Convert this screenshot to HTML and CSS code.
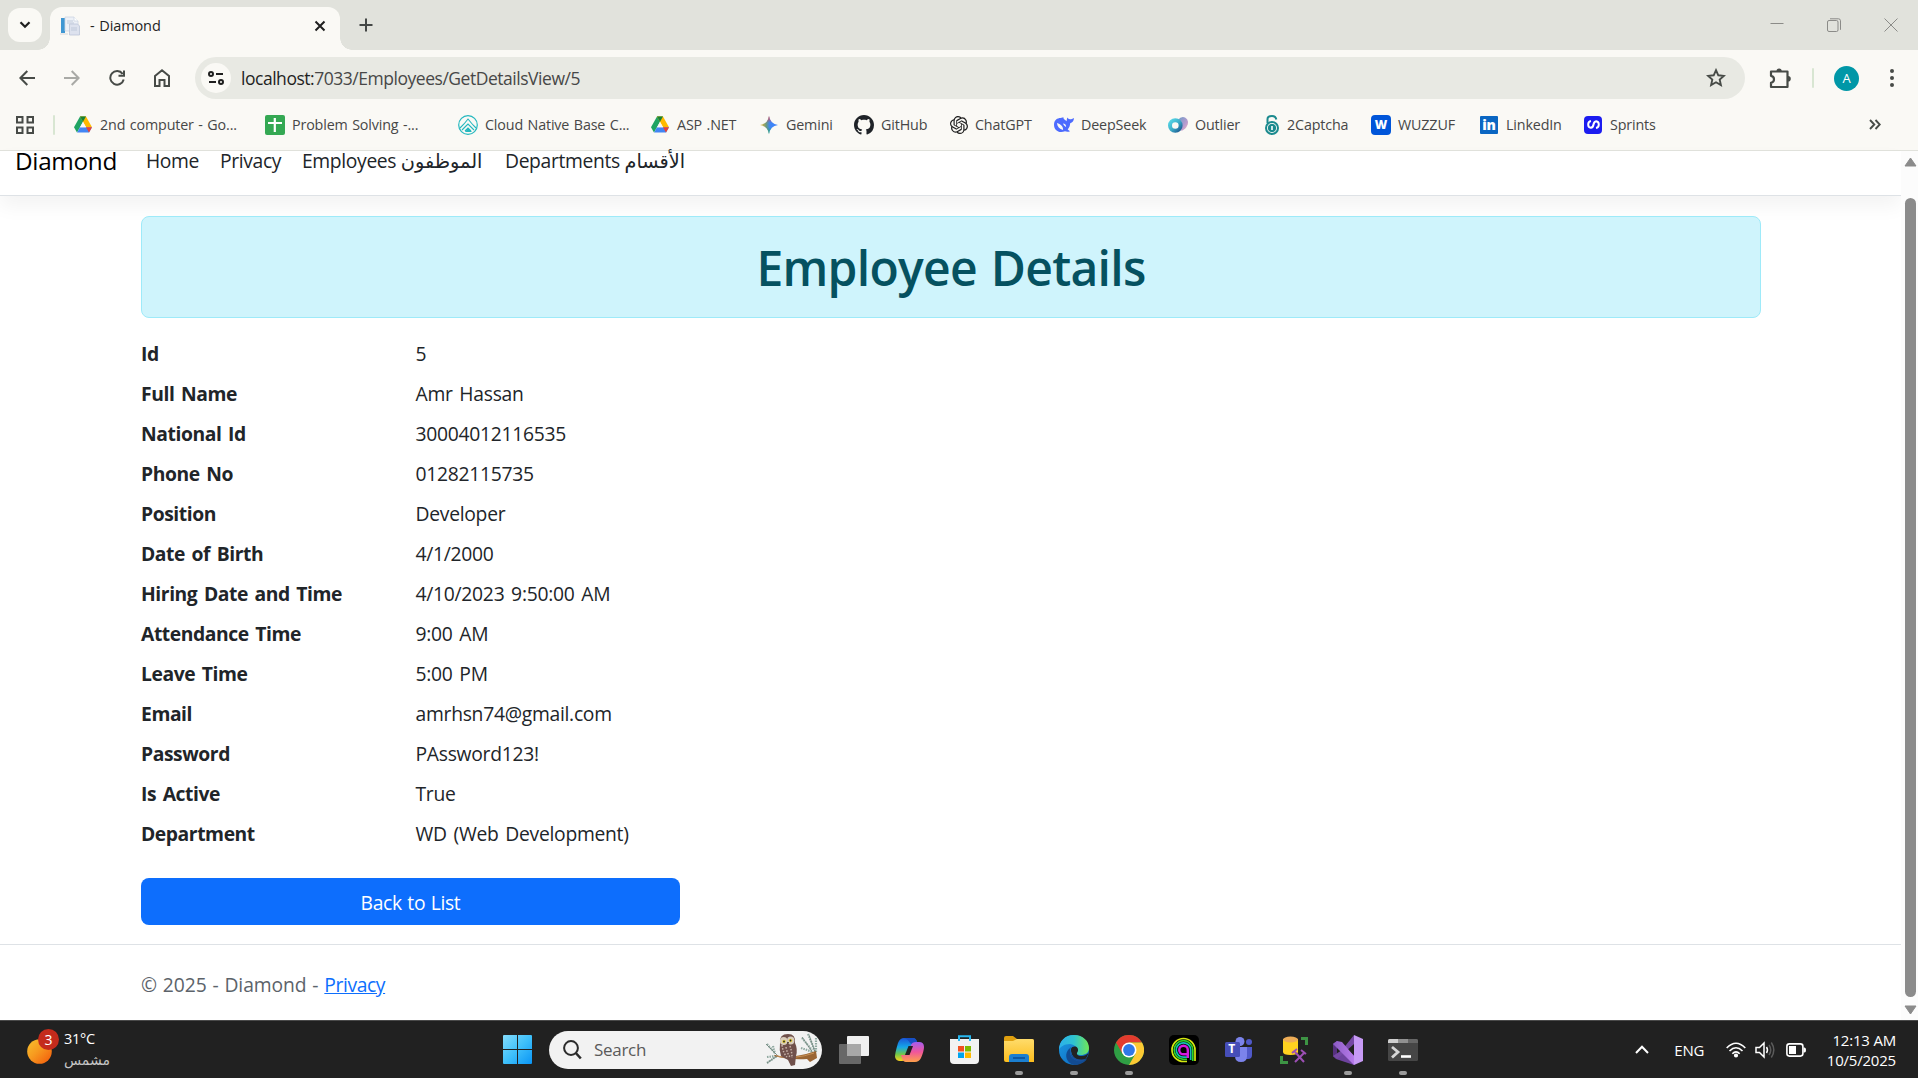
FILE: index.html
```html
<!DOCTYPE html>
<html lang="en">
<head>
<meta charset="utf-8">
<title>- Diamond</title>
<link rel="stylesheet" href="styles.css">
</head>
<body>
<svg width="0" height="0" class="defs" aria-hidden="true">
  <defs>
    <linearGradient id="sun" x1="0" y1="0" x2="1" y2="1"><stop offset="0" stop-color="#f7c12d"/><stop offset=".45" stop-color="#f79a1f"/><stop offset="1" stop-color="#f2560a"/></linearGradient>
    <linearGradient id="win" x1="0" y1="0" x2="1" y2="1"><stop offset="0" stop-color="#84dcfb"/><stop offset=".5" stop-color="#3fc0fa"/><stop offset="1" stop-color="#0a95f5"/></linearGradient>
    <linearGradient id="cpA" x1="0" y1="0" x2="0" y2="1"><stop offset="0" stop-color="#1a55d8"/><stop offset=".4" stop-color="#15a7e8"/><stop offset=".7" stop-color="#6fc64a"/><stop offset="1" stop-color="#fbd21c"/></linearGradient>
    <linearGradient id="cpB" x1="0" y1="0" x2="0" y2="1"><stop offset="0" stop-color="#a45cf0"/><stop offset=".5" stop-color="#f0569b"/><stop offset="1" stop-color="#fda04a"/></linearGradient>
    <linearGradient id="folder" x1="0" y1="0" x2="0" y2="1"><stop offset="0" stop-color="#ffdc6b"/><stop offset="1" stop-color="#fcbd1d"/></linearGradient>
    <linearGradient id="edgeA" x1="0" y1="0" x2="1" y2="0"><stop offset="0" stop-color="#2cb0ec"/><stop offset=".5" stop-color="#2fc3cf"/><stop offset="1" stop-color="#70e856"/></linearGradient>
    <linearGradient id="edgeB" x1="0" y1="0" x2="1" y2="1"><stop offset="0" stop-color="#1c9de4"/><stop offset="1" stop-color="#0b60bb"/></linearGradient>
    <linearGradient id="vs" x1="0" y1="0" x2="1" y2="0"><stop offset="0" stop-color="#8b5bc4"/><stop offset="1" stop-color="#b77bea"/></linearGradient>
    <linearGradient id="gem" x1="0" y1=".5" x2="1" y2=".5"><stop offset="0" stop-color="#f5b92a"/><stop offset=".35" stop-color="#6c9a80"/><stop offset=".55" stop-color="#3f86f7"/><stop offset="1" stop-color="#3d82f8"/></linearGradient>
    <linearGradient id="gemV" x1="0" y1="0" x2="0" y2="1"><stop offset="0" stop-color="#f0453d"/><stop offset=".38" stop-color="#f0453d" stop-opacity="0"/><stop offset=".62" stop-color="#23a858" stop-opacity="0"/><stop offset="1" stop-color="#23a858"/></linearGradient>
    <linearGradient id="outA" x1="0" y1="0" x2="1" y2="1"><stop offset="0" stop-color="#55d6e6"/><stop offset=".5" stop-color="#3eafc9"/><stop offset="1" stop-color="#1d5c93"/></linearGradient>
    <linearGradient id="outB" x1="0" y1="0" x2="1" y2="1"><stop offset="0" stop-color="#6b9bc7"/><stop offset=".6" stop-color="#b79bcf"/><stop offset="1" stop-color="#f2b4bd"/></linearGradient>
    <symbol id="drive" viewBox="0 0 18 16">
      <path d="M6 0h6L3 16 0 10.7z" fill="#1fa463"/><path d="M6 0h6l6 10.7h-6z" fill="#ffba00"/><path d="M3.1 16 6 10.7h12L15 16z" fill="#4285f4"/><path d="M12 10.7h6L15 16z" fill="#ea4335"/><path d="M6 0 9 5.3 12 0z" fill="#188038"/><path d="M9 5.3 12.1 10.7H6z" fill="#faf9f5"/>
    </symbol>
  </defs>
</svg>

<div class="screen">
  <div class="tabstrip">
    <button class="tab-search"><svg width="12" height="8" viewBox="0 0 12 8"><path d="M1.500 1.200L6 5.800l4.500-4.600" fill="none" stroke="#1f1f1f" stroke-width="2.200"/></svg></button>
    <div class="tab">
      <svg class="favicon" width="20" height="20" viewBox="0 0 20 20"><path d="M1 2h4v15H1z" fill="#3f97d3"/><path d="M5 1h9l4 4v10H5z" fill="#edf1f7" stroke="#cdd5e2" stroke-width=".8"/><path d="M14 1v4h4" fill="#fff" stroke="#cdd5e2" stroke-width=".8"/><path d="M9.500 8h8l2 2v9h-10z" fill="#dde2ee" stroke="#bcc5d8" stroke-width=".8"/><path d="M7 5h6M7 7h7M11 12h6M11 14h6" stroke="#bfc9da"/><path d="M0 18h8" stroke="#d8d8da"/></svg>
      <span class="tab-title">- Diamond</span>
      <svg class="tab-close" width="12" height="12" viewBox="0 0 12 12"><path d="M1.500 1.500l9 9M10.500 1.500l-9 9" stroke="#1f1f1f" stroke-width="2"/></svg>
    </div>
    <svg class="new-tab" width="14" height="14" viewBox="0 0 14 14"><path d="M7 .5v13M.5 7h13" stroke="#444746" stroke-width="2"/></svg>
    <div class="window-controls">
      <svg width="14" height="14" viewBox="0 0 14 14"><path d="M.5 5.500h13" stroke="#8b8b88"/></svg>
      <svg width="14" height="14" viewBox="0 0 14 14" fill="none" stroke="#8b8b88"><rect x=".5" y="2.500" width="10.500" height="11" rx="1.500"/><path d="M3 .8h8.500q2 0 2 2v9"/></svg>
      <svg width="14" height="14" viewBox="0 0 14 14"><path d="M.5.5l13 13M13.500.5l-13 13" stroke="#8b8b88"/></svg>
    </div>
  </div>

  <div class="toolbar">
    <svg class="tool" width="16" height="16" viewBox="0 0 16 16" fill="none" stroke="#474b47" stroke-width="2"><path d="M16 8H1.500M8.300 1L1.400 8l6.900 7"/></svg>
    <svg class="tool" width="16" height="16" viewBox="0 0 16 16" fill="none" stroke="#a9aaa6" stroke-width="2"><path d="M0 8h14.500M7.700 1l6.900 7-6.900 7"/></svg>
    <svg class="tool" width="16" height="16" viewBox="0 0 16 16" fill="none" stroke="#474b47" stroke-width="2"><path d="M13.600 3.800A6.800 6.800 0 1 0 14.700 9.500M15 .5v5.200H9.500"/></svg>
    <svg class="tool" width="16" height="18" viewBox="0 0 16 18" fill="none" stroke="#474b47" stroke-width="2"><path d="M1 7l7-5.700L15 7v10h-4.500v-6h-5v6H1z"/></svg>
    <div class="omnibox">
      <span class="site-info"><svg width="16" height="14" viewBox="0 0 16 14" fill="none" stroke="#1f1f1f" stroke-width="2"><circle cx="3" cy="3" r="2"/><path d="M8 3h7M1 11h7"/><circle cx="13" cy="11" r="2"/></svg></span>
      <span class="url"><b>localhost:</b>7033/Employees/GetDetailsView/5</span>
      <svg class="star" width="20" height="20" viewBox="0 0 20 20"><path d="M10 2.200l2.300 5.100 5.500.6-4.100 3.700 1.200 5.500L10 14.300l-4.900 2.800 1.200-5.500-4.100-3.700 5.500-.6z" fill="none" stroke="#474b47" stroke-width="1.900"/></svg>
    </div>
    <svg class="puzzle" width="22" height="22" viewBox="0 0 22 22"><path d="M2 4.500h16.500v15.500H2v-4.200q3-.5 3-3.500t-3-3.500z" fill="none" stroke="#474b47" stroke-width="2.200" stroke-linejoin="round"/><path d="M7.500 4a2.600 2.600 0 0 1 5.200 0zM19 9a2.800 2.800 0 0 1 0 5.600z" fill="#474b47"/></svg>
    <i class="divider"></i>
    <span class="avatar">A</span>
    <svg class="menu" width="4" height="18" viewBox="0 0 4 18" fill="#474b47"><circle cx="2" cy="2" r="2"/><circle cx="2" cy="9" r="2"/><circle cx="2" cy="16" r="2"/></svg>
  </div>

  <div class="bookmarks">
    <svg class="apps" width="18" height="18" viewBox="0 0 18 18" fill="none" stroke="#474b47" stroke-width="2"><path d="M1 1h5.500v5.500H1zM11.500 1H17v5.500h-5.500zM1 11.500h5.500V17H1zM11.500 11.500H17V17h-5.500z"/></svg>
    <i class="divider"></i>
    <div class="bm b1"><svg width="18" height="17"><use href="#drive"/></svg><span>2nd computer - Go...</span></div>
    <div class="bm b2"><svg width="20" height="20" viewBox="0 0 20 20"><rect width="20" height="20" rx="2" fill="#34a853"/><path d="M9.800 3v14M3 8h14" stroke="#fff" stroke-width="2.200"/></svg><span>Problem Solving -...</span></div>
    <div class="bm b3"><svg width="20" height="20" viewBox="0 0 20 20" fill="none" stroke="#25b8bf"><circle cx="10" cy="10" r="9.300" stroke-width="1.200"/><path d="M2 13l4-4 4-5 5 6 3 3M4 15l4-4 2-2 6 6M7 16l3-3 3 3" stroke-width="1.100"/><path d="M7 17l3-4 4 4z" fill="#25b8bf" stroke="none"/></svg><span>Cloud Native Base C...</span></div>
    <div class="bm b4"><svg width="18" height="17"><use href="#drive"/></svg><span>ASP .NET</span></div>
    <div class="bm b5"><svg width="18" height="18" viewBox="0 0 18 18"><path d="M9 0q1.200 7.800 9 9-7.800 1.200-9 9-1.200-7.800-9-9 7.800-1.200 9-9z" fill="url(#gem)"/><path d="M9 0q1.200 7.800 9 9-7.800 1.200-9 9-1.200-7.800-9-9 7.800-1.200 9-9z" fill="url(#gemV)"/></svg><span>Gemini</span></div>
    <div class="bm b6"><svg width="20" height="20" viewBox="0 0 16 16"><path fill="#1f2328" d="M8 0C3.580 0 0 3.580 0 8c0 3.540 2.290 6.530 5.470 7.590.4.070.55-.17.55-.38 0-.19-.01-.82-.01-1.490-2.010.37-2.530-.49-2.690-.94-.09-.23-.48-.94-.82-1.130-.28-.15-.68-.52-.01-.53.63-.01 1.080.58 1.230.82.72 1.210 1.870.87 2.330.66.07-.52.28-.87.51-1.070-1.780-.2-3.640-.89-3.640-3.950 0-.87.31-1.590.82-2.150-.08-.2-.36-1.020.08-2.120 0 0 .67-.21 2.200.82.64-.18 1.320-.27 2-.27s1.360.09 2 .27c1.530-1.040 2.200-.82 2.200-.82.44 1.100.16 1.920.08 2.120.51.56.82 1.270.82 2.150 0 3.070-1.870 3.750-3.650 3.950.29.25.54.73.54 1.480 0 1.070-.01 1.930-.01 2.200 0 .21.15.46.55.38A8.010 8.010 0 0 0 16 8c0-4.420-3.580-8-8-8z"/></svg><span>GitHub</span></div>
    <div class="bm b7"><svg width="18" height="18" viewBox="0 0 24 24"><path fill="#1f1f1f" d="M22.282 9.821a5.985 5.985 0 0 0-.516-4.910 6.046 6.046 0 0 0-6.510-2.900A6.065 6.065 0 0 0 4.981 4.180a5.985 5.985 0 0 0-3.998 2.900 6.046 6.046 0 0 0 .743 7.097 5.980 5.980 0 0 0 .510 4.911 6.051 6.051 0 0 0 6.515 2.900A5.985 5.985 0 0 0 13.260 24a6.056 6.056 0 0 0 5.772-4.206 5.990 5.990 0 0 0 3.997-2.900 6.056 6.056 0 0 0-.747-7.073zM13.260 22.430a4.476 4.476 0 0 1-2.876-1.040l.141-.081 4.779-2.758a.795.795 0 0 0 .392-.681v-6.737l2.020 1.168a.071.071 0 0 1 .038.052v5.583a4.504 4.504 0 0 1-4.494 4.494zM3.600 18.304a4.470 4.470 0 0 1-.535-3.014l.142.085 4.783 2.759a.771.771 0 0 0 .780 0l5.843-3.369v2.332a.080.080 0 0 1-.033.062L9.740 19.950a4.500 4.500 0 0 1-6.140-1.646zM2.340 7.896a4.485 4.485 0 0 1 2.366-1.973V11.600a.766.766 0 0 0 .388.676l5.815 3.355-2.020 1.168a.076.076 0 0 1-.071 0l-4.830-2.786A4.504 4.504 0 0 1 2.340 7.872zm16.597 3.855l-5.833-3.387L15.119 7.200a.076.076 0 0 1 .071 0l4.830 2.791a4.494 4.494 0 0 1-.676 8.105v-5.678a.790.790 0 0 0-.407-.667zm2.010-3.023l-.141-.085-4.774-2.782a.776.776 0 0 0-.785 0L9.409 9.230V6.897a.066.066 0 0 1 .028-.061l4.830-2.787a4.500 4.500 0 0 1 6.680 4.660zm-12.640 4.135l-2.020-1.164a.080.080 0 0 1-.038-.057V6.075a4.500 4.500 0 0 1 7.375-3.453l-.142.080L8.704 5.460a.795.795 0 0 0-.393.681zm1.097-2.365l2.602-1.500 2.607 1.500v2.999l-2.597 1.500-2.607-1.500z"/></svg><span>ChatGPT</span></div>
    <div class="bm b8"><svg width="20" height="16" viewBox="0 0 20 16"><path d="M0 7.500C0 3 3.500 1 6.500 1l3-.8c-.5 1.500 1.500 2.500 3 4 .5-1 .3-2.500.8-3.600.8 1 1.500 1.600 2.700 1.700 1.400 0 2.500-.6 4-1.300-.2 3-1.500 4.700-3.800 5.200-.2 2.500-1 4.500-2.500 6.200l2.300 1.800c-2 .9-4 .4-5 .1C5 16.500 0 13.500 0 7.500zM3 6c.2 3.500 2.500 6 6 7 .5-3-2-6-6-7zm6 .5c.5 1.500 1.500 2.800 3 3.500.4-1.900-1-3.500-3-3.500z" fill="#4d6bfe" fill-rule="evenodd"/></svg><span>DeepSeek</span></div>
    <div class="bm b9"><svg width="20" height="16" viewBox="0 0 20 16"><path d="M10 3q3-4 7-2.500 4 2 2.700 7Q18 12 13.500 14z" fill="url(#outB)"/><circle cx="7.300" cy="8.500" r="5.300" fill="#faf9f5" stroke="url(#outA)" stroke-width="4"/></svg><span>Outlier</span></div>
    <div class="bm b10"><svg width="16" height="20" viewBox="0 0 16 20" fill="none" stroke="#1b8a8e"><path d="M3.500 8V4q0-3 4.500-3 3.700 0 4.300 3.500" stroke-width="2"/><circle cx="8" cy="13" r="6" stroke-width="2"/><circle cx="8" cy="13" r="3.700" fill="#1b8a8e"/><path d="M8 11v4" stroke="#fff" stroke-width="1.600"/></svg><span>2Captcha</span></div>
    <div class="bm b11"><span class="logo wuzzuf">W</span><span>WUZZUF</span></div>
    <div class="bm b12"><span class="logo linkedin">in</span><span>LinkedIn</span></div>
    <div class="bm b13"><span class="logo sprints"><svg width="13" height="9" viewBox="0 0 13 9" fill="none" stroke="#fff" stroke-width="2"><path d="M4 1Q1.200 1.500 1.200 4.500T3.800 7.800Q6 7.500 6.500 4.500T9.200 1.200Q11.800 1.500 11.800 4.500T9 8"/></svg></span><span>Sprints</span></div>
    <svg class="more" width="12" height="11" viewBox="0 0 12 11"><path d="M1 1l4.300 4.500L1 10M6.500 1l4.300 4.500L6.500 10" fill="none" stroke="#474b47" stroke-width="1.900"/></svg>
  </div>

  <div class="viewport">
    <div class="page">
      <header class="navbar">
        <a class="brand">Diamond</a>
        <nav><a class="n1">Home</a><a class="n2">Privacy</a><a class="n3">Employees <bdi>الموظفون</bdi></a><a class="n4">Departments <bdi>الأقسام</bdi></a></nav>
      </header>
      <main class="container">
        <div class="alert"><h1>Employee Details</h1></div>
        <dl>
          <dt>Id</dt><dd>5</dd>
          <dt>Full Name</dt><dd>Amr Hassan</dd>
          <dt>National Id</dt><dd>30004012116535</dd>
          <dt>Phone No</dt><dd>01282115735</dd>
          <dt>Position</dt><dd>Developer</dd>
          <dt>Date of Birth</dt><dd>4/1/2000</dd>
          <dt>Hiring Date and Time</dt><dd>4/10/2023 9:50:00 AM</dd>
          <dt>Attendance Time</dt><dd>9:00 AM</dd>
          <dt>Leave Time</dt><dd>5:00 PM</dd>
          <dt>Email</dt><dd>amrhsn74@gmail.com</dd>
          <dt>Password</dt><dd>PAssword123!</dd>
          <dt>Is Active</dt><dd>True</dd>
          <dt>Department</dt><dd>WD (Web Development)</dd>
        </dl>
        <a class="btn">Back to List</a>
      </main>
      <footer>© 2025 - Diamond - <a>Privacy</a></footer>
    </div>
    <div class="scrollbar">
      <svg width="13" height="10" viewBox="0 0 13 10"><path d="M6.500 1L12 9H1z" fill="#8b8b8b" stroke="#8b8b8b" stroke-linejoin="round"/></svg>
      <i class="thumb"></i>
      <svg width="13" height="10" viewBox="0 0 13 10"><path d="M6.500 9L12 1H1z" fill="#8b8b8b" stroke="#8b8b8b" stroke-linejoin="round"/></svg>
    </div>
  </div>

  <div class="taskbar">
    <div class="weather">
      <div class="sun"><svg width="25" height="25" viewBox="0 0 25 25"><circle cx="12.500" cy="12.500" r="12.300" fill="url(#sun)"/></svg><span class="badge">3</span></div>
      <div class="forecast"><span>31°C</span><span class="cond" lang="ar">مشمس</span></div>
    </div>
    <div class="dock">
      <span class="app start"><svg width="29" height="29" viewBox="0 0 29 29"><path d="M0 1q0-1 1-1h13v14H0zM15 0h13q1 0 1 1v13H15zM0 15h14v14H1q-1 0-1-1zM15 15h14v13q0 1-1 1H15z" fill="url(#win)"/></svg></span>
      <div class="search">
        <svg width="19" height="20" viewBox="0 0 19 20" fill="none" stroke="#2b2b2b"><circle cx="8" cy="8" r="6.900" stroke-width="2"/><path d="M12.800 13l5 5.500" stroke-width="2.600"/></svg>
        <span>Search</span>
        <svg class="owl" width="54" height="34" viewBox="0 0 54 34">
          <g fill="none" stroke="#8fa8a0" stroke-width="2.200" stroke-dasharray="1.500 1"><path d="M2 11l8 9M8 13l2 8M2 30l10-7M2 24l9-1M37 5l10 12M43 1l7 17M36 15l12 4M51 5v14"/></g>
          <path d="M1 11l12 12M2 30l10-7M37 4l11 16M44 2l6 17" stroke="#6b8278" fill="none" stroke-width=".8"/>
          <path d="M10 22q14 5 41-4l1 7-7 4-3-3q-18 1-33-3z" fill="#9a6534"/><path d="M12 23q17 4 37-3" fill="none" stroke="#c99155"/>
          <path d="M15 10Q14 1 23 1q8 0 7 9 3 6 1 13l-1 9-4 1-3-6-7-4q-2-6-1-13z" fill="#70504b"/>
          <path d="M17 12q1 8 5 12M21 14q1 6 4 10M25 13q2 6 2 12" stroke="#c7b3a9" stroke-width="1.500" stroke-dasharray="1.500 1.500" fill="none"/>
          <ellipse cx="18.700" cy="8" rx="3.800" ry="4" fill="#d9cdbb"/><ellipse cx="25.700" cy="7.500" rx="3.700" ry="4" fill="#d9cdbb"/><circle cx="19" cy="8.500" r="1.800" fill="#e8cf3d"/><circle cx="25.500" cy="7.500" r="1.800" fill="#e8cf3d"/><circle cx="19" cy="8.500" r=".9" fill="#222"/><circle cx="25.500" cy="7.500" r=".9" fill="#222"/><path d="M22 9l1 3 1-3z" fill="#4b3a2a"/>
        </svg>
      </div>
      <span class="app"><svg width="30" height="28" viewBox="0 0 30 28"><rect x="8" width="22" height="20" rx="1" fill="#f0f0f0"/><rect y="8" width="22" height="20" rx="1" fill="#686868"/><path d="M8 8h14v12H8z" fill="#a8a8a8"/></svg></span>
      <span class="app"><svg width="29" height="26" viewBox="0 0 29 26"><path d="M9 1h9q3 0 4 4l1 3h-5q-3 0-4 4l-2 8q-1 4-5 4H5q-4 0-5-4 0-4 3-14 2-5 6-5z" fill="url(#cpA)"/><path d="M9 1h9q3 0 4 4l1 3h-5L15 6q-2-4-6-5z" fill="#174fc5"/><path d="M20 25h-9q-3 0-4-4l-1-3h4q3 0 4-4l2-6q1-3 5-3h3q5 0 5 5 0 4-3 11-2 4-6 4z" fill="url(#cpB)"/><path d="M13.500 9h4.500l-3.500 9H10z" fill="#212121"/></svg></span>
      <span class="app"><svg width="29" height="29" viewBox="0 0 29 29"><path d="M9 6V1.200h11V6" fill="none" stroke="#28b8f0" stroke-width="2"/><path d="M0 4h29v21q0 4-4 4H4q-4 0-4-4z" fill="#f2f2f2"/><path d="M20 4v2M9 4v2" stroke="#28b8f0" stroke-width="2"/><path d="M8 11h6v5.500H8z" fill="#f25022"/><path d="M15 11h6v5.500h-6z" fill="#7fba00"/><path d="M8 17.500h6V23H8z" fill="#00a4ef"/><path d="M15 17.500h6V23h-6z" fill="#ffb900"/></svg></span>
      <span class="app open"><svg width="30" height="27" viewBox="0 0 30 27"><path d="M0 2q0-2 2-2h7l4 3h15q2 0 2 2v3H0z" fill="#e0a00f"/><path d="M0 5h9l4-2h15q2 0 2 2v21H2q-2 0-2-2z" fill="url(#folder)"/><path d="M5 26v-5q0-3 3-3h14q3 0 3 3v5z" fill="#1b7fd0"/><path d="M9 22h12" stroke="#0a4d94" stroke-width="1.500"/></svg></span>
      <span class="app open"><svg width="30" height="30" viewBox="0 0 30 30"><circle cx="15" cy="15" r="15" fill="url(#edgeB)"/><path d="M0 15C0 6 6 0 15 0s15 6 15 13c0 5-4 7-8 7-4 0-5-1-4-3 2-3-1-7-7-8C5 9 1 12 0 15z" fill="url(#edgeA)"/><path d="M12 12c-3 7 1 14 9 14 3 0 5-1 7-2-3 4-8 6-13 6-7-2-10-9-6-15z" fill="#124b91"/><path d="M18.500 17c-1.500 2 0 4 4 4 3 0 5-1 7-3-1 3-2 5-4 7-8 2-14-4-13.500-11 1-3 5-3 6.500-1 .7 1 .8 3 0 4z" fill="#222"/><path d="M12 14c-.5 7 4 12 15 10-3 3-6 3-9 2-6-2-8-8-6-12z" fill="#164f9b"/></svg></span>
      <span class="app open"><svg width="30" height="30" viewBox="0 0 30 30"><circle cx="15" cy="15" r="15" fill="#2f9e44"/><path d="M2 7.500A15 15 0 0 1 28 7.500H15L8.500 18.700z" fill="#e33b2e"/><path d="M28 7.500A15 15 0 0 1 15 30l6.500-11.200L15 7.500z" fill="#fcc934"/><circle cx="15" cy="15" r="7.500" fill="#fff"/><circle cx="15" cy="15" r="5.900" fill="#2f78e8"/></svg></span>
      <span class="app"><svg width="30" height="30" viewBox="0 0 30 30" fill="none"><rect width="30" height="30" rx="5" fill="#000"/><g stroke-width="1.700"><path d="M26 26V15a11.500 11.500 0 1 0-11.500 11.500H18" stroke="#d4e810"/><path d="M23.800 26V15a9.300 9.300 0 1 0-9.300 9.300H18" stroke="#2ed32b"/><path d="M21.700 25V15a7.200 7.200 0 1 0-7.200 7.200H18" stroke="#14bdb4"/></g><path d="M18.800 23v-8a4.300 4.300 0 1 0-4.300 4.300h4.300" stroke="#d51be0" stroke-width="2.400"/></svg></span>
      <span class="app"><svg width="28" height="26" viewBox="0 0 28 26"><circle cx="24" cy="5" r="3" fill="#5059c9"/><path d="M19 10h8v8q0 4-4 4h-4z" fill="#5059c9"/><circle cx="15" cy="4.500" r="4.500" fill="#7b83eb"/><path d="M10 10h12v9q0 6-6 6t-6-6z" fill="#7b83eb"/><rect y="5" width="15" height="15" rx="1.500" fill="#464eb8"/></svg><b class="team-letter">T</b></span>
      <span class="app"><svg width="28" height="28" viewBox="0 0 28 28"><path d="M3 3v13q0 3 7.500 3t7.500-3V3z" fill="#ffd21f"/><ellipse cx="10.500" cy="3.500" rx="7.500" ry="3" fill="#eead57"/><path d="M21 2.500h5.500V9M1.500 20v6.500H8" fill="none" stroke="#3d9444" stroke-width="3"/><path d="M15 16l9 10M24 17l-9 9M12 17l5-4M21 14l5 4" stroke="#9c4fb5" stroke-width="2"/></svg></span>
      <span class="app open"><svg width="30" height="30" viewBox="0 0 30 30"><path d="M0 9l4-3 20 17-3 7L3 24l-3-3z" fill="#6d429e"/><path d="M0 9l4-3v18l-4-3z" fill="#563080"/><path d="M4 11l5 4-5 5z" fill="#212121"/><path d="M21 0l9 4v22l-9 4z" fill="#c79af5"/><path d="M9 15L21 0v9L4 24l-4-3z" fill="#7548a5"/><path d="M4 6l5 1 12 14v9L0 9z" fill="url(#vs)"/></svg></span>
      <span class="app open"><svg width="30" height="22" viewBox="0 0 30 22"><rect width="30" height="22" rx="1.500" fill="#464646"/><path d="M0 4V1.500Q0 0 1.500 0H10v4z" fill="#cfcfcf"/><path d="M10 0h10v4H10z" fill="#919191"/><path d="M20 0h8.500Q30 0 30 1.500V4H20z" fill="#666"/><path d="M4 8l6 5-6 5.500" fill="none" stroke="#d6d6d6" stroke-width="2.800"/><path d="M13 17.500h10" stroke="#fff" stroke-width="2.600"/></svg></span>
    </div>
    <div class="tray">
      <svg class="chev" width="14" height="9" viewBox="0 0 14 9"><path d="M1 8l6-6.300L13 8" fill="none" stroke="#fff" stroke-width="2"/></svg>
      <span class="lang">ENG</span>
      <svg class="wifi" width="20" height="16" viewBox="0 0 20 16" fill="none" stroke="#fff" stroke-width="1.600"><path d="M.7 6Q10-3.500 19.300 6M3.500 9Q10 2.500 16.500 9M6.300 11.800Q10 8 13.700 11.800"/><circle cx="10" cy="13.500" r="1.300" fill="#fff"/></svg>
      <svg class="vol" width="20" height="18" viewBox="0 0 20 18" fill="none" stroke="#fff" stroke-width="1.500"><path d="M1 6.500h3.500L9 2v14l-4.500-4.500H1z"/><path d="M11.500 6Q13.500 9 11.500 12"/><path d="M14 4Q17.500 9 14 14M16.300 1.500q5 7.500 0 15" stroke="#5b5b5b"/></svg>
      <svg class="bat" width="20" height="14" viewBox="0 0 20 14"><rect x=".9" y=".9" width="16" height="12.200" rx="2.500" fill="none" stroke="#fff" stroke-width="1.600"/><rect x="3" y="3" width="7" height="8" fill="#fff"/><path d="M17.500 4.500h1q1.500 0 1.500 2.500t-1.500 2.500h-1z" fill="#fff"/></svg>
      <div class="clock"><span>12:13 AM</span><span>10/5/2025</span></div>
    </div>
  </div>
</div>
</body>
</html>
```
FILE: styles.css
```css
* { box-sizing: border-box; }
body {
  margin: 0;
  overflow: hidden;
  font-family: "Open Sans", "Noto Sans", "DejaVu Sans", sans-serif;
  color: #212529;
}
svg { display: block; flex: none; }
.defs { position: absolute; }
.screen { width: 1918px; height: 1078px; display: flex; flex-direction: column; background: #fff; }

/* Browser chrome */
.tabstrip { height: 50px; flex: none; display: flex; align-items: center; background: #e1e2dc; }
.tab-search {
  width: 34px; height: 34px; margin: 0 8px; padding: 0; border: 0; border-radius: 12px;
  display: grid; place-items: center; background: #faf9f5;
}
.tab {
  align-self: flex-end; width: 290px; height: 43px; padding: 0 14px 6px 10px;
  display: flex; align-items: center; border-radius: 12px 12px 0 0; background: #faf9f5; position: relative;
}
.tab::before, .tab::after {
  content: ""; position: absolute; bottom: 0; width: 12px; height: 12px;
}
.tab::before { left: -12px; background: radial-gradient(circle at 0 0, transparent 11.5px, #faf9f5 12px); }
.tab::after { right: -12px; background: radial-gradient(circle at 100% 0, transparent 11.5px, #faf9f5 12px); }
.tab-title { margin-left: 10px; font-size: 14.500px; letter-spacing: -.1px; word-spacing: 1px; color: #1f1f1f; }
.tab-close { margin-left: auto; }
.new-tab { margin-left: 19px; }
.window-controls { display: flex; gap: 43px; margin-left: auto; margin-right: 20px; }

.toolbar { height: 57px; flex: none; display: flex; align-items: center; padding: 0 24px 1px 20px; background: #faf9f5; }
.tool { margin-right: 29px; }
.tool:first-child { margin-left: -1px; }
.omnibox {
  flex: 1; height: 42px; margin-left: -4px; padding: 0 19px 0 6px; border-radius: 21px;
  display: flex; align-items: center; background: #e8e9e3;
}
.site-info { width: 30px; height: 30px; border-radius: 50%; display: grid; place-items: center; background: #faf9f5; }
.url { margin-left: 10px; font-size: 17.500px; letter-spacing: -.47px; color: #474747; }
.url b { font-weight: 400; color: #1f1f1f; }
.star { margin-left: auto; }
.puzzle { margin-left: 24px; }
.toolbar .divider { margin: 0 20px 0 21px; }
.divider { width: 2px; height: 20px; border-radius: 1px; background: #d8e6d2; }
.avatar {
  width: 25px; height: 25px; border-radius: 50%; display: grid; place-items: center;
  background: #0097a7; color: #fff; font-size: 13px;
}
.menu { margin-left: 31px; margin-right: 0; }

.bookmarks {
  height: 44px; flex: none; display: flex; align-items: center; padding: 0 37px 8px 16px;
  border-bottom: 1px solid #e1e2dc; background: #faf9f5;
}
.bookmarks .divider { margin-left: 19px; margin-right: 19px; }
.bm {
  flex: none; display: flex; align-items: center; gap: 7px; font-size: 14.300px;
  letter-spacing: -.15px; word-spacing: 1px; white-space: nowrap; color: #474747;
}
.b1 { width: 191px; }
.b2 { width: 193px; }
.b3 { width: 193px; }
.b4 { width: 109px; }
.b5 { width: 94px; }
.b6 { width: 96px; }
.b7 { width: 104px; }
.b8 { width: 114px; }
.b9 { width: 96px; }
.b10 { width: 107px; }
.b11 { width: 109px; }
.b12 { width: 104px; }
.b1, .b4, .b5, .b12, .b13 { gap: 8px; }
.logo { display: grid; place-items: center; flex: none; color: #fff; font-weight: 800; }
.wuzzuf { width: 20px; height: 20px; border-radius: 4px; background: #0055d9; font-size: 12px; }
.linkedin { width: 18px; height: 18px; border-radius: 1px; background: #0a66c2; font-size: 14px; line-height: 16px; }
.sprints { width: 18px; height: 18px; border-radius: 4px; background: #1c1cf0; }
.more { margin-left: auto; }

/* Web page */
.viewport { flex: none; height: 869px; display: flex; background: #fff; }
.page { flex: 1; min-width: 0; display: flex; flex-direction: column; font-size: 19.300px; letter-spacing: -.15px; }
.navbar {
  height: 45px; flex: none; display: flex; align-items: flex-start; padding-left: 15px;
  border-bottom: 1px solid #dee2e6; box-shadow: 0 10px 20px rgba(0, 0, 0, .05); line-height: 30px;
}
.brand { width: 131px; margin-top: -5px; font-size: 24.300px; letter-spacing: -.3px; color: #000; }
.navbar nav { display: flex; margin-top: -5px; letter-spacing: -.35px; }
.navbar nav a { white-space: nowrap; }
.navbar bdi { letter-spacing: 0; }
.n1 { width: 74px; }
.n2 { width: 82px; }
.n3 { width: 203px; }
.container { width: 1620px; margin: 20px 0 0 141px; }
.alert {
  height: 102px; padding-top: 2px; display: grid; place-items: center; border: 1px solid #9eeaf9; border-radius: 8px;
  background: #cff4fc; color: #055160;
}
h1 { margin: 0; font-size: 48px; font-weight: 600; line-height: 60px; letter-spacing: -.7px; word-spacing: 2px; }
dl { margin: 21px 0 0; display: grid; grid-template-columns: 274.500px 1fr; grid-auto-rows: 40px; line-height: 30px; }
dt { font-weight: 700; letter-spacing: -.42px; }
dd { margin: 0; letter-spacing: -.27px; }
dt, dd { word-spacing: 2px; white-space: nowrap; }
.btn {
  width: 539px; height: 47px; margin-top: 19px; padding-top: 1px; display: grid; place-items: center;
  border-radius: 8px; background: #0d6efd; color: #fff; letter-spacing: -.35px; word-spacing: 1px;
}
footer {
  margin-top: 19px; border-top: 1px solid #dee2e6; padding-left: 141px; line-height: 79px;
  color: #5c636a; letter-spacing: -.1px; word-spacing: 1px;
}
footer a { color: #0d6efd; text-decoration: underline; letter-spacing: -.4px; }
.scrollbar {
  width: 17px; flex: none; padding: 6px 0 5px 2px; display: flex; flex-direction: column;
  align-items: center; background: #fcfcfc;
}
.thumb { flex: 1; width: 11px; margin: 31px 0 8px; border-radius: 6px; background: #8b8b8b; }

/* Taskbar */
.taskbar {
  flex: 1; display: flex; align-items: center; border-top: 1px solid #4a4a4a;
  background: #212121; color: #fff; font-size: 14px;
}
.weather { width: 502px; flex: none; display: flex; padding-left: 27px; }
.sun { position: relative; width: 37px; height: 44px; padding-top: 11px; }
.badge {
  position: absolute; left: 11px; top: 1px; width: 21px; height: 21px; border-radius: 50%;
  display: grid; place-items: center; background: #c42b1c; font-size: 14px;
}
.forecast { display: flex; flex-direction: column; line-height: 21px; font-size: 14.500px; letter-spacing: -.3px; }
.cond { color: #c5c5c5; font-size: 14px; letter-spacing: 0; }
.dock { display: flex; align-items: center; }
.app { position: relative; width: 54.900px; height: 57px; display: grid; place-items: center; }
.start { width: 30px; margin-right: 17px; }
.open::after {
  content: ""; position: absolute; bottom: 3px; left: 50%; width: 8px; height: 4px; margin-left: -4px;
  border-radius: 2px; background: #9b9b9b;
}
.team-letter { position: absolute; left: 17px; top: 19px; font-size: 12px; }
.search {
  width: 273px; height: 38px; margin-right: 5px; padding: 0 3px 0 14px; display: flex; align-items: center;
  gap: 12px; border-radius: 19px; background: #f2f2f2; color: #5a5a5a; font-size: 17px; letter-spacing: -.3px;
}
.owl { margin-left: auto; }
.tray { flex: 1; display: flex; align-items: center; padding-right: 22px; }
.chev { margin-left: auto; }
.lang { margin-left: 25px; font-size: 15px; letter-spacing: -.3px; }
.wifi { margin-left: 22px; }
.vol { margin-left: 9px; }
.bat { margin-left: 11px; }
.clock {
  width: 90px; display: flex; flex-direction: column; text-align: right;
  font-size: 15px; line-height: 20px; letter-spacing: -.2px;
}
```
